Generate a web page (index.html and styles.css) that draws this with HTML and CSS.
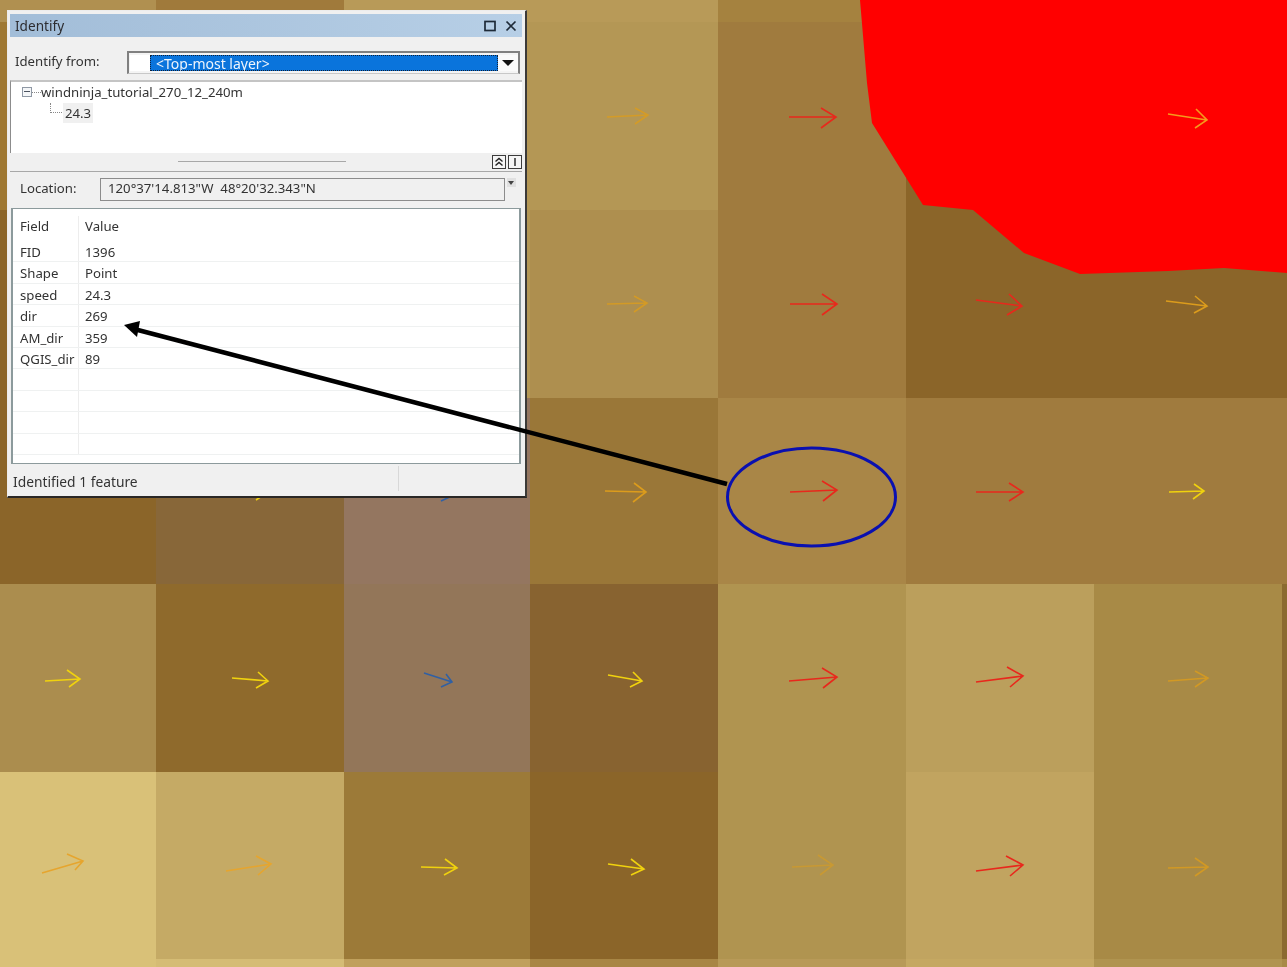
FILE: index.html
```html
<!DOCTYPE html>
<html lang="en">
<head>
<meta charset="utf-8">
<title>Identify</title>
<link rel="stylesheet" href="styles.css">
</head>
<body>
<main class="stage">
  <div class="map">
    <i class="c-b09050"></i><i class="c-a07a3b"></i><i class="c-b89a58"></i><i class="c-b89a58"></i><i class="c-a5823f"></i><i class="c-a5823f"></i><i class="c-a5823f"></i><i class="c-a5823f"></i>
    <i class="c-9f7832"></i><i class="c-a07a3b"></i><i class="c-b49755"></i><i class="c-b49755"></i><i class="c-a07b3e"></i><i class="c-8b6529"></i><i class="c-8b6529"></i><i class="c-8b6529"></i>
    <i class="c-8b6529"></i><i class="c-a07a3b"></i><i class="c-b49755"></i><i class="c-ae8f4f"></i><i class="c-a07b3e"></i><i class="c-8b6529"></i><i class="c-8b6529"></i><i class="c-8b6529"></i>
    <i class="c-8b6529"></i><i class="c-886739"></i><i class="c-947660"></i><i class="c-9a7738"></i><i class="c-a98647"></i><i class="c-a07b3e"></i><i class="c-a07b3e"></i><i class="c-a07b3e"></i>
    <i class="c-ab8d4e"></i><i class="c-8f6a2c"></i><i class="c-937659"></i><i class="c-886330"></i><i class="c-b09450"></i><i class="c-bb9f5c"></i><i class="c-a88a46"></i><i class="c-8b6a30"></i>
    <i class="c-d9c178"></i><i class="c-c5aa65"></i><i class="c-9c7a38"></i><i class="c-8b6529"></i><i class="c-b09450"></i><i class="c-c1a460"></i><i class="c-a88a46"></i><i class="c-8b6a30"></i>
    <i class="c-d9c178"></i><i class="c-d5bc75"></i><i class="c-c0a05c"></i><i class="c-a88645"></i><i class="c-b89a58"></i><i class="c-c5a862"></i><i class="c-b09450"></i><i class="c-a88a46"></i>
  </div>

  <svg class="overlay soft" viewBox="0 0 1287 967" aria-hidden="true">
    <polygon class="fire" points="860,0 867,83 872,123 923,205 973,210 1024,253 1080,274 1168,271 1224,268 1287,273 1287,0"/>
    <g class="wind">
      <path class="orange faint" d="M607 117L648 115M635 108L648 115L635 124"/>
      <path class="red" d="M789 117L836 117M821 108L836 117L821 128"/>
      <path class="hot" d="M1168 114L1207 120M1196 109L1207 120L1195 128"/>
      <path class="orange faint" d="M607 304L647 303M634 296L647 303L634 312"/>
      <path class="red" d="M790 304L837 304M822 294L837 304L822 315"/>
      <path class="red" d="M976 300L1022 306M1009 294L1022 306L1007 315"/>
      <path class="orange" d="M1166 301L1207 306M1195 296L1207 306L1194 313"/>
      <path class="yellow" d="M232 490L268 492M258 484L268 492L256 500"/>
      <path class="blue" d="M424 490L452 496M446 488L452 496L441 501"/>
      <path class="orange" d="M605 491L646 492M634 483L646 492L633 502"/>
      <path class="red" d="M790 492L837 490M822 481L837 490L823 501"/>
      <path class="red" d="M976 492L1023 492M1009 483L1023 492L1009 501"/>
      <path class="yellow" d="M1169 492L1204 491M1194 484L1204 491L1193 499"/>
      <path class="yellow" d="M45 681L80 679M67 670L80 679L69 687"/>
      <path class="yellow" d="M232 678L268 681M258 672L268 681L256 688"/>
      <path class="blue" d="M424 673L452 682M446 674L452 682L441 687"/>
      <path class="yellow" d="M608 675L642 681M633 672L642 681L630 687"/>
      <path class="red" d="M789 681L837 677M822 668L837 677L823 688"/>
      <path class="red" d="M976 682L1023 676M1007 667L1023 676L1010 687"/>
      <path class="orange faint" d="M1168 681L1208 678M1195 671L1208 678L1195 687"/>
      <path class="amber" d="M42 873L83 861M67 854L83 861L75 870"/>
      <path class="amber" d="M226 871L271 864M256 856L271 864L258 875"/>
      <path class="yellow" d="M421 867L457 868M445 859L457 868L444 875"/>
      <path class="yellow" d="M608 864L644 869M631 859L644 869L631 875"/>
      <path class="orange faintest" d="M792 867L833 865M818 855L833 865L820 875"/>
      <path class="red" d="M976 871L1023 865M1006 856L1023 865L1010 876"/>
      <path class="orange faint" d="M1168 868L1208 867M1195 858L1208 867L1195 876"/>
    </g>
  </svg>

  <section class="panel">
    <header class="titlebar">
      <h1 class="title">Identify</h1>
      <svg class="winicon" viewBox="0 0 12 12" aria-hidden="true"><rect x="1" y="1.5" width="10" height="9" class="winstroke"/></svg>
      <svg class="winicon" viewBox="0 0 12 12" aria-hidden="true"><path d="M1.5 1.5L10.5 10.5M10.5 1.5L1.5 10.5" class="winstroke"/></svg>
    </header>

    <div class="fromrow">
      <span class="fromlabel">Identify from:</span>
      <div class="combo">
        <span class="swatch"></span>
        <span class="selected">&lt;Top-most layer&gt;</span>
        <span class="dropbtn"><span class="triangle"></span></span>
      </div>
    </div>

    <div class="tree">
      <div class="node">
        <span class="expander"></span>
        <span class="dots"></span>
        <span>windninja_tutorial_270_12_240m</span>
      </div>
      <div class="child">
        <span class="elbow"></span>
        <span class="leaf">24.3</span>
      </div>
    </div>

    <div class="splitter">
      <span class="gripline"></span>
      <span class="minibtn">
        <svg viewBox="0 0 12 11" aria-hidden="true"><path d="M2.5 5L6 2L9.5 5M2.5 9L6 6L9.5 9" class="chev"/></svg>
      </span>
      <span class="minibtn">
        <svg viewBox="0 0 12 11" aria-hidden="true"><path d="M6 1.5V9.5" class="chev"/></svg>
      </span>
    </div>

    <div class="location">
      <span class="loclabel">Location:</span>
      <div class="locinput">120°37'14.813"W&nbsp; 48°20'32.343"N</div>
      <span class="locmenu"></span>
    </div>

    <div class="fields">
      <div class="fieldhead"><span>Field</span><span>Value</span></div>
      <div class="row"><span>FID</span><span>1396</span></div>
      <div class="row"><span>Shape</span><span>Point</span></div>
      <div class="row"><span>speed</span><span>24.3</span></div>
      <div class="row"><span>dir</span><span>269</span></div>
      <div class="row"><span>AM_dir</span><span>359</span></div>
      <div class="row"><span>QGIS_dir</span><span>89</span></div>
      <div class="row"><span></span><span></span></div>
      <div class="row"><span></span><span></span></div>
      <div class="row"><span></span><span></span></div>
      <div class="row"><span></span><span></span></div>
    </div>

    <footer class="status">
      <span class="statustext">Identified 1 feature</span>
      <span class="statuscell"></span>
    </footer>
  </section>

  <svg class="overlay soft" viewBox="0 0 1287 967" aria-hidden="true">
    <polygon class="leaderhead" points="124,325 140,321 137,337"/>
    <line class="leader" x1="134" y1="329" x2="727" y2="484"/>
    <ellipse class="ring" cx="811.5" cy="497" rx="84" ry="49"/>
  </svg>
</main>
</body>
</html>
```
FILE: styles.css
```css
* { box-sizing: border-box; }
html, body { margin: 0; padding: 0; }
body { font-family: "Noto Sans", "Liberation Sans", sans-serif; overflow: hidden; }

.stage { position: relative; width: 1287px; height: 967px; overflow: hidden; }

.map {
  display: grid;
  width: 1287px;
  height: 967px;
  grid-template-columns: 156px 188px 186px 188px 188px 188px 188px 5px;
  grid-template-rows: 22px 188px 188px 186px 188px 187px 8px;
}
.c-b09050 { background: #b09050; }
.c-a07a3b { background: #a07a3b; }
.c-b89a58 { background: #b89a58; }
.c-a5823f { background: #a5823f; }
.c-9f7832 { background: #9f7832; }
.c-b49755 { background: #b49755; }
.c-a07b3e { background: #a07b3e; }
.c-8b6529 { background: #8b6529; }
.c-ae8f4f { background: #ae8f4f; }
.c-886739 { background: #886739; }
.c-947660 { background: #947660; }
.c-9a7738 { background: #9a7738; }
.c-a98647 { background: #a98647; }
.c-ab8d4e { background: #ab8d4e; }
.c-8f6a2c { background: #8f6a2c; }
.c-937659 { background: #937659; }
.c-886330 { background: #886330; }
.c-b09450 { background: #b09450; }
.c-bb9f5c { background: #bb9f5c; }
.c-a88a46 { background: #a88a46; }
.c-8b6a30 { background: #8b6a30; }
.c-d9c178 { background: #d9c178; }
.c-c5aa65 { background: #c5aa65; }
.c-9c7a38 { background: #9c7a38; }
.c-c1a460 { background: #c1a460; }
.c-d5bc75 { background: #d5bc75; }
.c-c0a05c { background: #c0a05c; }
.c-a88645 { background: #a88645; }
.c-c5a862 { background: #c5a862; }

.overlay { position: absolute; left: 0; top: 0; width: 1287px; height: 967px; pointer-events: none; }
.soft { filter: blur(0.35px); }
.fire { fill: #ff0000; }
.wind path { fill: none; stroke-width: 1.6; stroke-linejoin: miter; }
.red { stroke: #e8281c; }
.hot { stroke: #f59a1c; }
.orange { stroke: #dc9c1c; }
.amber { stroke: #e6a52e; }
.yellow { stroke: #f0d20e; }
.blue { stroke: #3060a4; }
.faint { opacity: 0.8; }
.faintest { opacity: 0.55; }

.leader { stroke: #000; stroke-width: 4.5; }
.leaderhead { fill: #000; }
.ring { fill: none; stroke: #0a10b0; stroke-width: 3; }

.panel {
  position: absolute;
  left: 7px;
  top: 10px;
  width: 520px;
  height: 488px;
  display: flex;
  flex-direction: column;
  padding: 3px 3px 2px 2px;
  background: #f0f0f0;
  border: 1px solid #ececec;
  border-right: 2px solid #3c3a38;
  border-bottom: 2px solid #2a2826;
  color: #333;
  font-size: 13.2px;
  line-height: 18px;
  filter: blur(0.35px);
}

.titlebar {
  height: 23px;
  flex: none;
  display: flex;
  align-items: center;
  gap: 9px;
  padding: 0 5px;
  background: linear-gradient(90deg, #a2bdd8, #b7cfe6);
}
.title { flex: 1; margin: 0; font-size: 13.6px; font-weight: 400; color: #2c2c30; }
.winicon { width: 12px; height: 12px; }
.winstroke { fill: none; stroke: #1e2a38; stroke-width: 1.7; }

.fromrow {
  height: 43px;
  flex: none;
  display: flex;
  align-items: center;
  padding: 14px 2px 6px 5px;
}
.fromlabel { width: 112px; flex: none; margin-top: -3px; }
.combo {
  flex: 1;
  height: 23px;
  display: flex;
  align-items: stretch;
  padding: 2px 0 2px 1px;
  background: #f4f4f4;
  border: 2px solid #808080;
  border-bottom: 1px solid #c8c8c8;
}
.swatch { width: 20px; background: #fff; }
.selected {
  flex: 1;
  padding-left: 6px;
  font-size: 14px;
  line-height: 18px;
  background: #0a74dc;
  color: #eef4fc;
  outline: 1px dotted #102038;
  outline-offset: -1px;
}
.dropbtn { width: 20px; display: flex; align-items: center; justify-content: center; background: #fafafa; }
.triangle { width: 0; height: 0; border: 6px solid transparent; border-top: 6px solid #111; border-bottom: 0; }

.tree {
  height: 73px;
  flex: none;
  background: #fff;
  border-top: 2px solid #c4c4c4;
  border-left: 1px solid #8c8c8c;
  padding: 1px 0 0 11px;
}
.node { display: flex; align-items: center; height: 18px; }
.expander {
  position: relative;
  width: 10px;
  height: 10px;
  flex: none;
  border: 1px solid #8f98a4;
  background: #f4f6f8;
}
.expander::after {
  content: "";
  position: absolute;
  left: 1px;
  right: 1px;
  top: 3px;
  height: 1px;
  background: #4c5460;
}
.dots { width: 9px; margin-right: 0; border-top: 1px dotted #888; flex: none; }
.child { display: flex; align-items: flex-start; height: 22px; padding: 2px 0 0 28px; }
.elbow {
  width: 12px;
  height: 10px;
  flex: none;
  border-left: 1px dotted #888;
  border-bottom: 1px dotted #888;
}
.leaf { padding: 1px 2px; margin: 0 0 0 1px; background: #f0f0f0; }

.splitter {
  position: relative;
  height: 18px;
  flex: none;
  display: flex;
  justify-content: flex-end;
  align-items: flex-start;
  gap: 2px;
  padding: 2px 0 0;
}
.gripline {
  position: absolute;
  left: 168px;
  top: 8px;
  width: 168px;
  height: 1px;
  background: #a8a8a8;
}
.minibtn { width: 14px; height: 14px; display: block; border: 1px solid #3c3c3c; background: #f6f6f6; }
.minibtn svg { display: block; width: 12px; height: 12px; }
.chev { fill: none; stroke: #222; stroke-width: 1.4; }

.location {
  height: 37px;
  flex: none;
  display: flex;
  align-items: flex-start;
  padding: 6px 0 0 10px;
  border-top: 1px solid #a8a8a8;
}
.loclabel { width: 80px; flex: none; line-height: 21px; }
.locinput {
  width: 405px;
  height: 23px;
  flex: none;
  padding-left: 7px;
  line-height: 18px;
  border: 1px solid #8c8c8c;
  background: #f0f0f0;
}
.locmenu {
  position: relative;
  width: 9px;
  height: 9px;
  margin: 0 0 0 2px;
  flex: none;
  background: #e0e0e0;
}
.locmenu::after {
  content: "";
  position: absolute;
  left: 1px;
  top: 3px;
  border: 3.5px solid transparent;
  border-top: 4px solid #444;
  border-bottom: 0;
}

.fields {
  height: 256px;
  flex: none;
  margin: 0 1px;
  padding-left: 0;
  background: #fff;
  border: 1px solid #8c9a9c;
  border-left-width: 2px;
  border-right-width: 2px;
  overflow: hidden;
}
.fieldhead, .row {
  display: grid;
  grid-template-columns: 65px 1fr;
}
.fieldhead { height: 32px; padding-top: 7px; line-height: 20px; }
.row { height: 21.4px; line-height: 22px; border-bottom: 1px solid #eff1f1; }
.fieldhead span, .row span { padding-left: 7px; min-height: 100%; }
.fieldhead span + span, .row span + span { padding-left: 6px; border-left: 1px solid #ededed; }

.status {
  flex: 1;
  display: flex;
  align-items: center;
  padding-left: 3px;
  font-size: 13.8px;
}
.statustext { width: 385px; flex: none; padding-top: 5px; }
.statuscell { align-self: stretch; width: 1px; background: #d8d8d8; margin: 2px 0 3px; }
```
